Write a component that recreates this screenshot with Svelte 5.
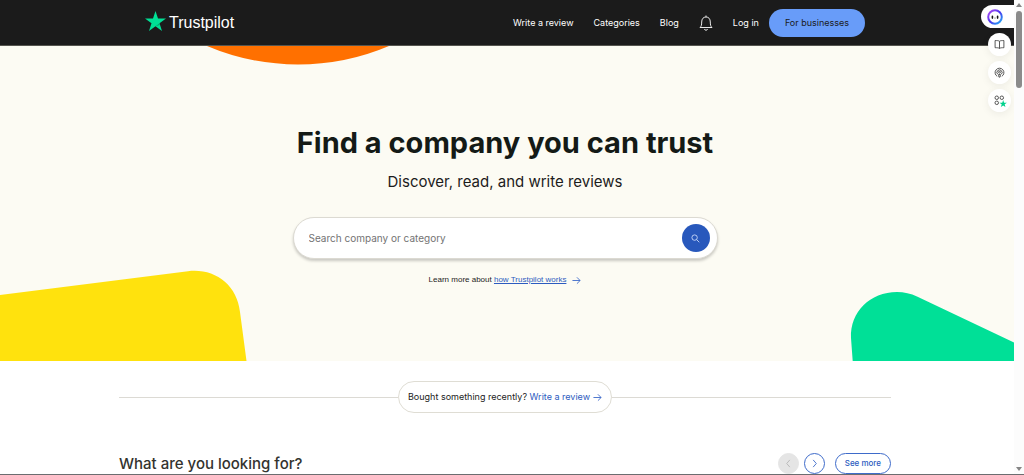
<script lang="ts">
  let query = $state("");

  const links = ["Write a review", "Categories", "Blog"];
</script>

{#snippet arrow()}
  <svg class="arrow" viewBox="0 0 10 10" aria-hidden="true">
    <path d="M0.5 5h8.5M5.5 1.5L9 5L5.5 8.5" />
  </svg>
{/snippet}

<div class="window">
  <div class="page">
    <header>
      <div class="bar">
        <a class="logo" href="/" aria-label="Trustpilot">
          <svg viewBox="0 0 21 20" aria-hidden="true">
            <path fill="#00e095" d="M10.500 0l2.500 7.600h8l-6.500 4.700l2.500 7.700l-6.500-4.700l-6.500 4.700l2.500-7.700l-6.500-4.700h8z" />
            <path fill="#00a870" d="M15 14.100l-.5-1.800l-4 3z" />
          </svg>
          <span>Trustpilot</span>
        </a>
        <nav>
          {#each links as link (link)}
            <a href="/">{link}</a>
          {/each}
          <button class="bell" aria-label="Notifications">
            <svg viewBox="0 0 14 16" aria-hidden="true">
              <path d="M1 12.500c1.300-1.200 1.700-2.500 1.700-5.500c0-3.200 1.700-5 4.300-5s4.300 1.800 4.300 5c0 3 .4 4.300 1.700 5.500zM7 2V.5M5.300 14.200c.6 1.300 2.800 1.300 3.400 0" />
            </svg>
          </button>
          <a href="/">Log in</a>
          <a class="business" href="/">For businesses</a>
        </nav>
      </div>
    </header>

    <section class="hero">
      <svg class="shape orange" viewBox="0 0 182 19" aria-hidden="true">
        <path d="M0 0A233 233 0 0 0 182 0z" />
      </svg>
      <svg class="shape yellow" viewBox="0 0 247 91" aria-hidden="true">
        <path d="M0 25L188 1.200C214-2 237 14 240 42L246.500 91H0z" />
      </svg>
      <svg class="shape green" viewBox="0 0 163 69" aria-hidden="true">
        <path d="M1.700 69L0 46C-1 20 19 0 46 0C53 0 60 1.500 66 4.500L163 50.500V69z" />
      </svg>

      <h1>Find a company you can trust</h1>
      <p class="lead">Discover, read, and write reviews</p>
      <form class="search" onsubmit={(e) => e.preventDefault()}>
        <input type="text" aria-label="Search company or category" placeholder="Search company or category" bind:value={query} />
        <button aria-label="Search">
          <svg viewBox="0 0 10 10" aria-hidden="true">
            <circle cx="4" cy="4" r="3" />
            <path d="M6.200 6.200L9.200 9.200" />
          </svg>
        </button>
      </form>
      <p class="learn">
        <span>Learn more about <a href="/">how Trustpilot works</a></span>
        {@render arrow()}
      </p>
    </section>

    <div class="content">
      <div class="prompt">
        <p>
          <span>Bought something recently? <a href="/">Write a review</a></span>
          {@render arrow()}
        </p>
      </div>
      <div class="looking">
        <h2>What are you looking for?</h2>
        <button class="round" disabled aria-label="Previous">
          <svg viewBox="0 0 10 10" aria-hidden="true"><path d="M6.500 1L3 5L6.500 9" /></svg>
        </button>
        <button class="round" aria-label="Next">
          <svg viewBox="0 0 10 10" aria-hidden="true"><path d="M3.500 1L7 5L3.500 9" /></svg>
        </button>
        <a class="more" href="/">See more</a>
      </div>
    </div>

    <aside>
      <button class="assistant" aria-label="Assistant">
        <svg viewBox="0 0 16 16" aria-hidden="true">
          <defs>
            <linearGradient id="ring" x1="0" y1="0" x2="1" y2="1">
              <stop offset="0" stop-color="#b44cf5" />
              <stop offset="0.500" stop-color="#4a35ee" />
              <stop offset="1" stop-color="#20b8f5" />
            </linearGradient>
          </defs>
          <circle cx="8" cy="8" r="6.800" fill="#fff" stroke="url(#ring)" stroke-width="2" />
          <path d="M5.400 7.300v1.800M10.600 7.300v1.800" stroke="#151515" stroke-width="1.600" stroke-linecap="round" />
          <path d="M7.400 9q.6.600 1.200 0" fill="none" stroke="#151515" stroke-width=".6" />
        </svg>
      </button>
      <button class="tool" aria-label="Read">
        <svg viewBox="0 0 12 12" aria-hidden="true">
          <path d="M6 2.500C5 1.700 3.500 1.700 1.200 1.700v7.800c2.300 0 3.800 0 4.800.8c1-.8 2.500-.8 4.800-.8V1.700C8.500 1.700 7 1.700 6 2.500zM6 2.500v7.800" />
        </svg>
      </button>
      <button class="tool" aria-label="Listen">
        <svg viewBox="0 0 12 12" aria-hidden="true">
          <path d="M3.500 10.200A4.800 4.800 0 1 1 8.500 10.200M4 7.900A2.800 2.800 0 1 1 8 7.900" />
          <circle cx="6" cy="5.700" r="1" />
          <path d="M5 8.200h2l-.4 2.800h-1.200z" />
        </svg>
      </button>
      <button class="tool" aria-label="More tools">
        <svg viewBox="0 0 12 12" aria-hidden="true">
          <circle cx="3" cy="3" r="1.900" />
          <circle cx="8.500" cy="3" r="1.900" />
          <circle cx="3" cy="8.500" r="1.900" />
          <path class="star" d="M10 5.500l1 2.900h3.100l-2.500 1.800l.9 3l-2.500-1.800l-2.500 1.800l.9-3L5.900 8.400H9z" />
        </svg>
      </button>
    </aside>
  </div>

  <div class="scrollbar" aria-hidden="true">
    <svg viewBox="0 0 6 4"><path d="M0 4L3 0L6 4z" /></svg>
    <div class="thumb"></div>
    <svg class="down" viewBox="0 0 6 4"><path d="M0 0L3 4L6 0z" /></svg>
  </div>
</div>

<style>
  :global(body) {
    margin: 0;
  }
  .window {
    display: flex;
    height: 100vh;
    box-sizing: border-box;
    border-bottom: 1px solid #6b6d70;
    overflow: hidden;
    background: #fff;
    color: #1c1c1c;
    font-family: Inter, "Liberation Sans", sans-serif;
    font-size: 9px;
  }
  .page {
    position: relative;
    flex: 1;
    min-width: 0;
    overflow: hidden;
  }
  h1,
  h2,
  p {
    margin: 0;
  }
  a {
    color: #2c5bc0;
  }
  button {
    display: flex;
    align-items: center;
    justify-content: center;
    flex: none;
    padding: 0;
    border: 0;
    background: none;
    cursor: pointer;
  }
  svg {
    flex: none;
    fill: none;
    overflow: visible;
  }

  header {
    padding: 0 20px 0 16px;
    background: #1b1b1b;
    border-bottom: 1px solid #55554f;
  }
  .bar {
    display: flex;
    align-items: center;
    justify-content: space-between;
    max-width: 720px;
    height: 45px;
    margin: 0 auto;
  }
  .logo {
    display: flex;
    align-items: center;
    gap: 3px;
    color: #fff;
    font-family: "Liberation Sans", Arial, sans-serif;
    font-size: 16px;
    text-decoration: none;
  }
  .logo svg {
    width: 21px;
    height: 20px;
    margin-bottom: 4px;
  }
  nav {
    display: flex;
    align-items: center;
    gap: 20px;
  }
  nav a {
    color: #fff;
    text-decoration: none;
  }
  .bell svg {
    width: 14px;
    height: 16px;
    stroke: #e8e8e8;
  }
  nav .business {
    margin-left: -10px;
    padding: 0 16px;
    border-radius: 14px;
    background: #689cf9;
    color: #1b1b1b;
    line-height: 28px;
  }

  .hero {
    position: relative;
    display: flex;
    flex-direction: column;
    align-items: center;
    padding: 77px 24px 75px 20px;
    background: #fcfbf3;
  }
  .shape {
    position: absolute;
  }
  .orange {
    top: 0;
    left: 207px;
    width: 182px;
    fill: #ff7000;
  }
  .yellow {
    bottom: 0;
    left: 0;
    width: 247px;
    fill: #ffe20d;
  }
  .green {
    right: 0;
    bottom: 0;
    width: 163px;
    fill: #00e097;
  }
  h1 {
    position: relative;
    color: #141a16;
    font-size: 29px;
    line-height: 40px;
  }
  .lead {
    margin-top: 9px;
    font-size: 15px;
    line-height: 20px;
  }
  .search {
    display: flex;
    align-items: center;
    box-sizing: border-box;
    width: 100%;
    max-width: 425px;
    height: 42px;
    margin-top: 25px;
    padding: 0 7px 0 15px;
    border: 1px solid #dcdad2;
    border-radius: 21px;
    background: #fff;
    box-shadow: 0 2px 3px #0003;
  }
  input {
    flex: 1;
    min-width: 0;
    padding: 0;
    border: 0;
    outline: 0;
    background: none;
    font-family: inherit;
    font-size: 10px;
  }
  input::placeholder {
    color: #737373;
    opacity: 1;
  }
  .search button {
    width: 28px;
    height: 28px;
    border-radius: 50%;
    background: #2858bc;
  }
  .search svg {
    width: 9px;
    stroke: #c8d8f8;
  }
  .learn {
    display: flex;
    align-items: center;
    gap: 6px;
    margin-top: 15px;
    font-family: "Liberation Sans", Arial, sans-serif;
    font-size: 8px;
    line-height: 12px;
  }
  .arrow {
    width: 9px;
    stroke: #3e6bca;
  }

  .content {
    max-width: 772px;
    margin: 0 auto;
    padding: 20px 24px 0 20px;
  }
  .prompt {
    display: flex;
    align-items: center;
  }
  .prompt::before,
  .prompt::after {
    content: "";
    flex: 1;
    height: 1px;
    background: #dcdad4;
  }
  .prompt p {
    display: flex;
    align-items: center;
    gap: 3px;
    padding: 0 9px;
    border: 1px solid #dfddd4;
    border-radius: 16px;
    line-height: 30px;
  }
  .prompt a {
    text-decoration: none;
  }
  .looking {
    display: flex;
    align-items: center;
    gap: 5px;
    margin-top: 40px;
  }
  h2 {
    flex: 1;
    color: #33332e;
    font-size: 15px;
    font-weight: 500;
    line-height: 20px;
  }
  .round {
    box-sizing: border-box;
    width: 21px;
    height: 21px;
    border: 1px solid #3e6bca;
    border-radius: 50%;
  }
  .round svg {
    width: 9px;
    stroke: #3e6bca;
  }
  .round:disabled {
    border-color: #e5e5e5;
    background: #e5e5e5;
  }
  .round:disabled svg {
    stroke: #b5b5b5;
  }
  .more {
    margin-left: 5px;
    padding: 0 9px;
    border: 1px solid #3e6bca;
    border-radius: 11px;
    font-size: 8px;
    font-weight: 500;
    line-height: 19px;
    text-decoration: none;
  }

  aside {
    position: absolute;
    top: 5px;
    right: 0;
    display: flex;
    flex-direction: column;
    align-items: flex-end;
    gap: 5px;
  }
  .assistant {
    justify-content: flex-start;
    box-sizing: border-box;
    width: 33px;
    height: 23px;
    padding-left: 6px;
    border-radius: 12px 0 0 12px;
    background: #fff;
  }
  .assistant svg {
    width: 16px;
  }
  .tool {
    width: 23px;
    height: 23px;
    margin-right: 3px;
    border-radius: 50%;
    background: #fff;
    box-shadow: 0 2px 8px #0001;
  }
  .tool svg {
    width: 11px;
    stroke: #484848;
  }
  .tool .star {
    fill: #00d18c;
    stroke: none;
  }

  .scrollbar {
    display: flex;
    flex-direction: column;
    align-items: center;
    width: 10px;
    box-sizing: border-box;
    padding: 3px 0;
    background: #fcfcfc;
  }
  .scrollbar svg {
    width: 6px;
    fill: #858585;
  }
  .thumb {
    width: 6px;
    height: 77px;
    margin-top: 4px;
    border-radius: 3px;
    background: #8b8b8b;
  }
  .down {
    margin-top: auto;
  }
</style>
